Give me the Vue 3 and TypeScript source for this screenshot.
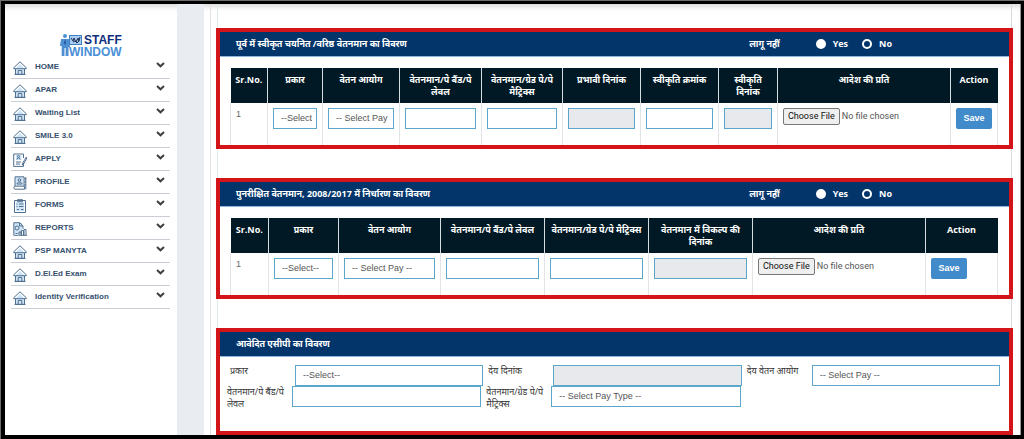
<script setup lang="ts">
import { reactive } from 'vue'

type IconName = 'home' | 'apply' | 'profile' | 'forms' | 'reports'
type FieldKind = 'index' | 'select' | 'text' | 'disabled' | 'file' | 'action'

interface MenuItem {
  label: string
  icon: IconName
}

interface Column {
  title: string
  kind: FieldKind
  share: number
  option?: string
}

interface Section {
  id: string
  title: string
  applicable: 'yes' | 'no'
  columns: Column[]
}

interface Field {
  id: string
  label: string
  kind: 'select' | 'text' | 'disabled'
  option?: string
}

const menu: MenuItem[] = [
  { label: 'HOME', icon: 'home' },
  { label: 'APAR', icon: 'home' },
  { label: 'Waiting List', icon: 'home' },
  { label: 'SMILE 3.0', icon: 'home' },
  { label: 'APPLY', icon: 'apply' },
  { label: 'PROFILE', icon: 'profile' },
  { label: 'FORMS', icon: 'forms' },
  { label: 'REPORTS', icon: 'reports' },
  { label: 'PSP MANYTA', icon: 'home' },
  { label: 'D.El.Ed Exam', icon: 'home' },
  { label: 'Identity Verification', icon: 'home' },
]

const sections = reactive<Section[]>([
  {
    id: 'approved',
    title: 'पूर्व में स्वीकृत चयनित /वरिष्ठ वेतनमान का विवरण',
    applicable: 'yes',
    columns: [
      { title: 'Sr.No.', kind: 'index', share: 37 },
      { title: 'प्रकार', kind: 'select', share: 55, option: '--Select--' },
      { title: 'वेतन आयोग', kind: 'select', share: 77, option: '-- Select Pay --' },
      { title: 'वेतनमान/पे बैंड/पे लेवल', kind: 'text', share: 82 },
      { title: 'वेतनमान/ग्रेड पे/पे मैट्रिक्स', kind: 'text', share: 81 },
      { title: 'प्रभावी दिनांक', kind: 'disabled', share: 78 },
      { title: 'स्वीकृति क्रमांक', kind: 'text', share: 78 },
      { title: 'स्वीकृति दिनांक', kind: 'disabled', share: 59 },
      { title: 'आदेश की प्रति', kind: 'file', share: 173 },
      { title: 'Action', kind: 'action', share: 47 },
    ],
  },
  {
    id: 'revised',
    title: 'पुनरीक्षित वेतनमान, 2008/2017 में निर्धारण का विवरण',
    applicable: 'yes',
    columns: [
      { title: 'Sr.No.', kind: 'index', share: 38 },
      { title: 'प्रकार', kind: 'select', share: 70, option: '--Select--' },
      { title: 'वेतन आयोग', kind: 'select', share: 102, option: '-- Select Pay --' },
      { title: 'वेतनमान/पे बैंड/पे लेवल', kind: 'text', share: 104 },
      { title: 'वेतनमान/ग्रेड पे/पे मैट्रिक्स', kind: 'text', share: 104 },
      { title: 'वेतनमान में विकल्प की दिनांक', kind: 'disabled', share: 104 },
      { title: 'आदेश की प्रति', kind: 'file', share: 173 },
      { title: 'Action', kind: 'action', share: 72 },
    ],
  },
])

const acpRows: Field[][] = [
  [
    { id: 'acp-type', label: 'प्रकार', kind: 'select', option: '--Select--' },
    { id: 'acp-date', label: 'देय दिनांक', kind: 'disabled' },
    { id: 'acp-pay', label: 'देय वेतन आयोग', kind: 'select', option: '-- Select Pay --' },
  ],
  [
    { id: 'acp-band', label: 'वेतनमान/पे बैंड/पे लेवल', kind: 'text' },
    { id: 'acp-grade', label: 'वेतनमान/ग्रेड पे/पे मैट्रिक्स', kind: 'select', option: '-- Select Pay Type --' },
  ],
]

function colWidth(section: Section, column: Column): string {
  const total = section.columns.reduce((sum, c) => sum + c.share, 0)
  return `${((column.share / total) * 100).toFixed(3)}%`
}
</script>

<template>
  <div class="frame">
    <div class="page">
      <aside class="sidebar">
        <div class="logo">
          <svg class="logo-man" viewBox="0 0 10 22" aria-hidden="true">
            <circle cx="5" cy="2" r="2" />
            <path d="M1 5h8l1 8H8.500V22H5.600v-8H4.500v8H1.700V12H0z" />
            <path class="tie" d="M5 5l1 4-1 2-1-2z" />
          </svg>
          <div class="logo-words">
            <div class="logo-top">
              <svg class="logo-box" viewBox="0 0 13 10" aria-hidden="true">
                <rect x="0.500" y="0.500" width="12" height="9" />
                <path d="M2 3l2 3 1-3 2 4 2-4 1 3 1-4M4 7l2-1 2 2 2-2" />
              </svg>
              <span>STAFF</span>
            </div>
            <div class="logo-bottom">WINDOW</div>
          </div>
        </div>
        <nav>
          <ul class="menu">
            <li v-for="item in menu" :key="item.label">
              <button type="button" class="menu-item">
                <svg class="menu-icon" viewBox="0 0 14 14" aria-hidden="true">
                  <template v-if="item.icon === 'home'">
                    <path class="tint" d="M3 7l4-4 4 4v6H3z" />
                    <path d="M.7 6.800L7 .8l6.300 6v.9H.7zM2.500 7.700v5.700h9V7.700M5.200 13.400V9.500h3.600v3.900M1.500 13.400h11" />
                  </template>
                  <template v-else-if="item.icon === 'apply'">
                    <rect class="tint" x="3" y="2" width="5.500" height="5" />
                    <path d="M10.500 5V1H.7v12.400h9.800V10M3 9h5M3 11h4M4 6.500c0-2 3-2 3 0M13.300 4l-3.500 6-.5 2 1.500-1.300L14 5z" />
                    <circle cx="5.500" cy="3.500" r="1" />
                  </template>
                  <template v-else-if="item.icon === 'profile'">
                    <rect class="tint" x="2" y="1" width="8" height="9" />
                    <path d="M2 .8h9v9.400H2zM2 10.200c-1.500 0-1.500 3 0 3h9.500v-3M4 8c0-2.500 5-2.500 5 0zM12.800 1v12.300M11 3h2M11 6h2M11 9h2" />
                    <circle cx="6.500" cy="4" r="1.300" />
                  </template>
                  <template v-else-if="item.icon === 'forms'">
                    <rect class="tint" x="3" y="3" width="8" height="9" />
                    <path d="M1.500 1.500h11v12h-11zM4.500.7h5v2h-5zM3.500 5h1M6 5h4.500M3.500 7.500h1M6 7.500h4.500M4 10.500h2M8 10.500h2.500" />
                  </template>
                  <template v-else>
                    <path class="tint" d="M1 1h8v11H1z" />
                    <path d="M5 13.300H.8V.7h6L10 4v3M6.500 1v3H10M2.500 11.500h2M6 13.300V10h2v3.300M8.500 13.300V8.500h2v4.800M11 13.300V7.500h2v5.800M5.500 13.300H14" />
                    <circle cx="4" cy="6" r="2" />
                  </template>
                </svg>
                <span class="menu-label">{{ item.label }}</span>
                <svg class="chevron" viewBox="0 0 9 6" aria-hidden="true">
                  <path d="M1 1l3.500 3.300L8 1" />
                </svg>
              </button>
            </li>
          </ul>
        </nav>
      </aside>

      <main class="main">
        <div class="panel">
          <div class="stack">
            <section v-for="section in sections" :key="section.id" class="box">
              <header class="bar">
                <h2>{{ section.title }}</h2>
                <fieldset class="toggle">
                  <legend>लागू नहीं</legend>
                  <label><input v-model="section.applicable" type="radio" :name="section.id" value="yes" />Yes</label>
                  <label><input v-model="section.applicable" type="radio" :name="section.id" value="no" />No</label>
                </fieldset>
              </header>
              <table class="grid">
                <colgroup>
                  <col v-for="column in section.columns" :key="column.title" :style="{ width: colWidth(section, column) }" />
                </colgroup>
                <thead>
                  <tr>
                    <th v-for="column in section.columns" :key="column.title" scope="col">{{ column.title }}</th>
                  </tr>
                </thead>
                <tbody>
                  <tr>
                    <td v-for="column in section.columns" :key="column.title">
                      <span v-if="column.kind === 'index'" class="index">1</span>
                      <select v-else-if="column.kind === 'select'" class="control" :aria-label="column.title">
                        <option>{{ column.option }}</option>
                      </select>
                      <input v-else-if="column.kind === 'file'" type="file" class="file" :aria-label="column.title" />
                      <button v-else-if="column.kind === 'action'" type="button" class="save">Save</button>
                      <input v-else type="text" class="control" :disabled="column.kind === 'disabled'" :aria-label="column.title" />
                    </td>
                  </tr>
                </tbody>
              </table>
            </section>

            <section class="box last">
              <header class="bar">
                <h2>आवेदित एसीपी का विवरण</h2>
              </header>
              <form class="acp" @submit.prevent>
                <div v-for="(row, index) in acpRows" :key="index" class="acp-row">
                  <div v-for="field in row" :key="field.id" class="field">
                    <label :for="field.id">{{ field.label }}</label>
                    <select v-if="field.kind === 'select'" :id="field.id" class="control">
                      <option>{{ field.option }}</option>
                    </select>
                    <input v-else :id="field.id" type="text" class="control" :disabled="field.kind === 'disabled'" />
                  </div>
                </div>
              </form>
            </section>
          </div>
        </div>
      </main>
    </div>
  </div>
</template>

<style>
body {
  margin: 0;
  background: #000;
}
</style>

<style scoped>
* {
  box-sizing: border-box;
}

.frame {
  display: flex;
  min-height: 100vh;
  padding: 3px 3px 4px 4px;
  border-top: 1px solid #6b6e6c;
  border-left: 1px solid #6b6e6c;
  background: #000;
  font-family: "Liberation Sans", Arial, sans-serif;
}

.page {
  display: flex;
  flex: 1;
  min-width: 0;
  border-right: 1px solid #9a9a9a;
  background: #fff;
  box-shadow: inset 0 6px 6px -4px #d0d0d0;
}

.sidebar {
  width: 172px;
  flex: none;
  padding: 30px 7px 0 6px;
}

.logo {
  display: flex;
  height: 22px;
  padding-left: 49px;
}

.logo-man {
  width: 10px;
  height: 22px;
  flex: none;
  fill: #4c90d2;
}

.logo-man .tie {
  fill: #26549a;
}

.logo-words {
  margin-left: -1px;
  font-size: 12px;
  font-weight: 700;
  line-height: 12px;
}

.logo-top {
  display: flex;
  align-items: center;
  gap: 2px;
  height: 12px;
  color: #102f7c;
}

.logo-box {
  width: 13px;
  height: 10px;
  fill: #a9cdf0;
  stroke: #3f7fc4;
}

.logo-box path {
  fill: none;
  stroke: #1a2c58;
}

.logo-bottom {
  color: #4a8fd6;
}

.menu {
  margin: 0;
  padding: 0;
  list-style: none;
}

.menu li {
  border-bottom: 1px solid #c9ced4;
}

.menu-item {
  display: flex;
  align-items: flex-start;
  width: 100%;
  height: 22px;
  padding: 0 5px 0 1px;
  border: 0;
  background: none;
  color: #35506f;
  font: 700 8px/22px "Liberation Sans", Arial, sans-serif;
  text-align: left;
}

.menu-icon {
  width: 14px;
  height: 14px;
  margin: 5px 8px 0 1px;
  flex: none;
  fill: none;
  stroke: #50708f;
}

.menu-icon .tint {
  fill: #cfe4f6;
  stroke: none;
}

.menu-label {
  flex: 1;
}

.chevron {
  width: 9px;
  height: 6px;
  margin-top: 6px;
  fill: none;
  stroke: #3c4043;
  stroke-width: 2;
}

.main {
  display: flex;
  flex: 1;
  min-width: 0;
  padding-left: 6px;
  border-left: 27px solid #e9edf2;
}

.panel {
  display: flex;
  flex: 1;
  min-width: 0;
  padding: 0 8px 0 6px;
  border-left: 1px solid #dfe3e3;
}

.stack {
  display: flex;
  flex: 1;
  flex-direction: column;
  gap: 29px;
  min-width: 0;
  padding-top: 24px;
  border-right: 1px solid #d9dcdc;
  border-left: 1px solid #dcebeb;
}

.box {
  margin: 0 -2px;
  border: 4px solid #d3151a;
  background: #fff;
}

.last {
  flex: 1;
}

.bar {
  display: flex;
  align-items: center;
  height: 25px;
  padding: 0 117px 0 16px;
  border-bottom: 1px solid #8fb8dc;
  background: #03356b;
  color: #fff;
  font: 700 9px/12px "Open Sans", "Noto Sans", sans-serif;
}

.bar h2 {
  flex: 1;
  margin: 0;
  font-size: 9px;
  font-weight: 700;
}

.toggle {
  display: flex;
  align-items: center;
  gap: 14px;
  margin: 0;
  padding: 0;
  border: 0;
}

.toggle legend {
  float: left;
  margin-right: 22px;
  padding: 0;
}

.toggle label {
  display: flex;
  align-items: center;
  gap: 7px;
}

.toggle input {
  width: 10px;
  height: 10px;
  margin: 0;
  border: 2px solid #fff;
  border-radius: 50%;
  appearance: none;
}

.toggle input:checked {
  background: #fff;
}

.grid {
  width: calc(100% - 21px);
  margin: 11px 11px 0 10px;
  border-collapse: collapse;
  table-layout: fixed;
}

.grid th {
  height: 35px;
  padding: 6px 4px 0;
  border-right: 1px solid #d5dde0;
  background: #001925;
  color: #fff;
  font: 700 9px/12px "Open Sans", "Noto Sans", sans-serif;
  vertical-align: top;
}

.grid th:last-child {
  border-right-color: #001925;
}

.grid td {
  height: 42px;
  padding: 5px;
  border-right: 1px solid #e1e4e4;
  border-left: 1px solid #e1e4e4;
  vertical-align: top;
  font-size: 0;
}

.index {
  color: #666;
  font-size: 9px;
  line-height: 12px;
}

.control {
  display: block;
  width: 100%;
  min-width: 0;
  height: 21px;
  margin: 0;
  padding: 0 4px 0 7px;
  border: 1px solid #5ba7cb;
  border-radius: 0;
  outline: 0;
  background: #fff;
  color: #555;
  font: 9px/19px "Liberation Sans", Arial, sans-serif;
  appearance: none;
}

.control:disabled {
  background: #e7e9ed;
}

.file {
  display: block;
  width: 100%;
  color: #555;
  font: 9px/15px Roboto, "Liberation Sans", sans-serif;
}

.file::file-selector-button {
  height: 17px;
  margin: 0 2px 0 0;
  padding: 0 4px;
  border: 1px solid #777;
  border-radius: 2px;
  background: #efefef;
  color: #111;
  font: 9px/15px Roboto, "Liberation Sans", sans-serif;
}

.save {
  display: block;
  width: 36px;
  height: 21px;
  padding: 0;
  border: 0;
  border-radius: 2px;
  background: #428bca;
  color: #fff;
  font: 700 9px/21px "Liberation Sans", Arial, sans-serif;
}

.acp {
  padding: 8px 9px 0 7px;
}

.acp-row {
  display: grid;
  grid-template-columns: repeat(3, 1fr);
  gap: 5px;
}

.acp-row:first-child {
  padding-left: 3px;
}

.field {
  display: flex;
  align-items: flex-start;
  height: 21px;
}

.field label {
  width: 65px;
  flex: none;
  color: #333;
  font: 9px/12px "Open Sans", "Noto Sans", sans-serif;
}

.field .control {
  flex: 1;
}
</style>
